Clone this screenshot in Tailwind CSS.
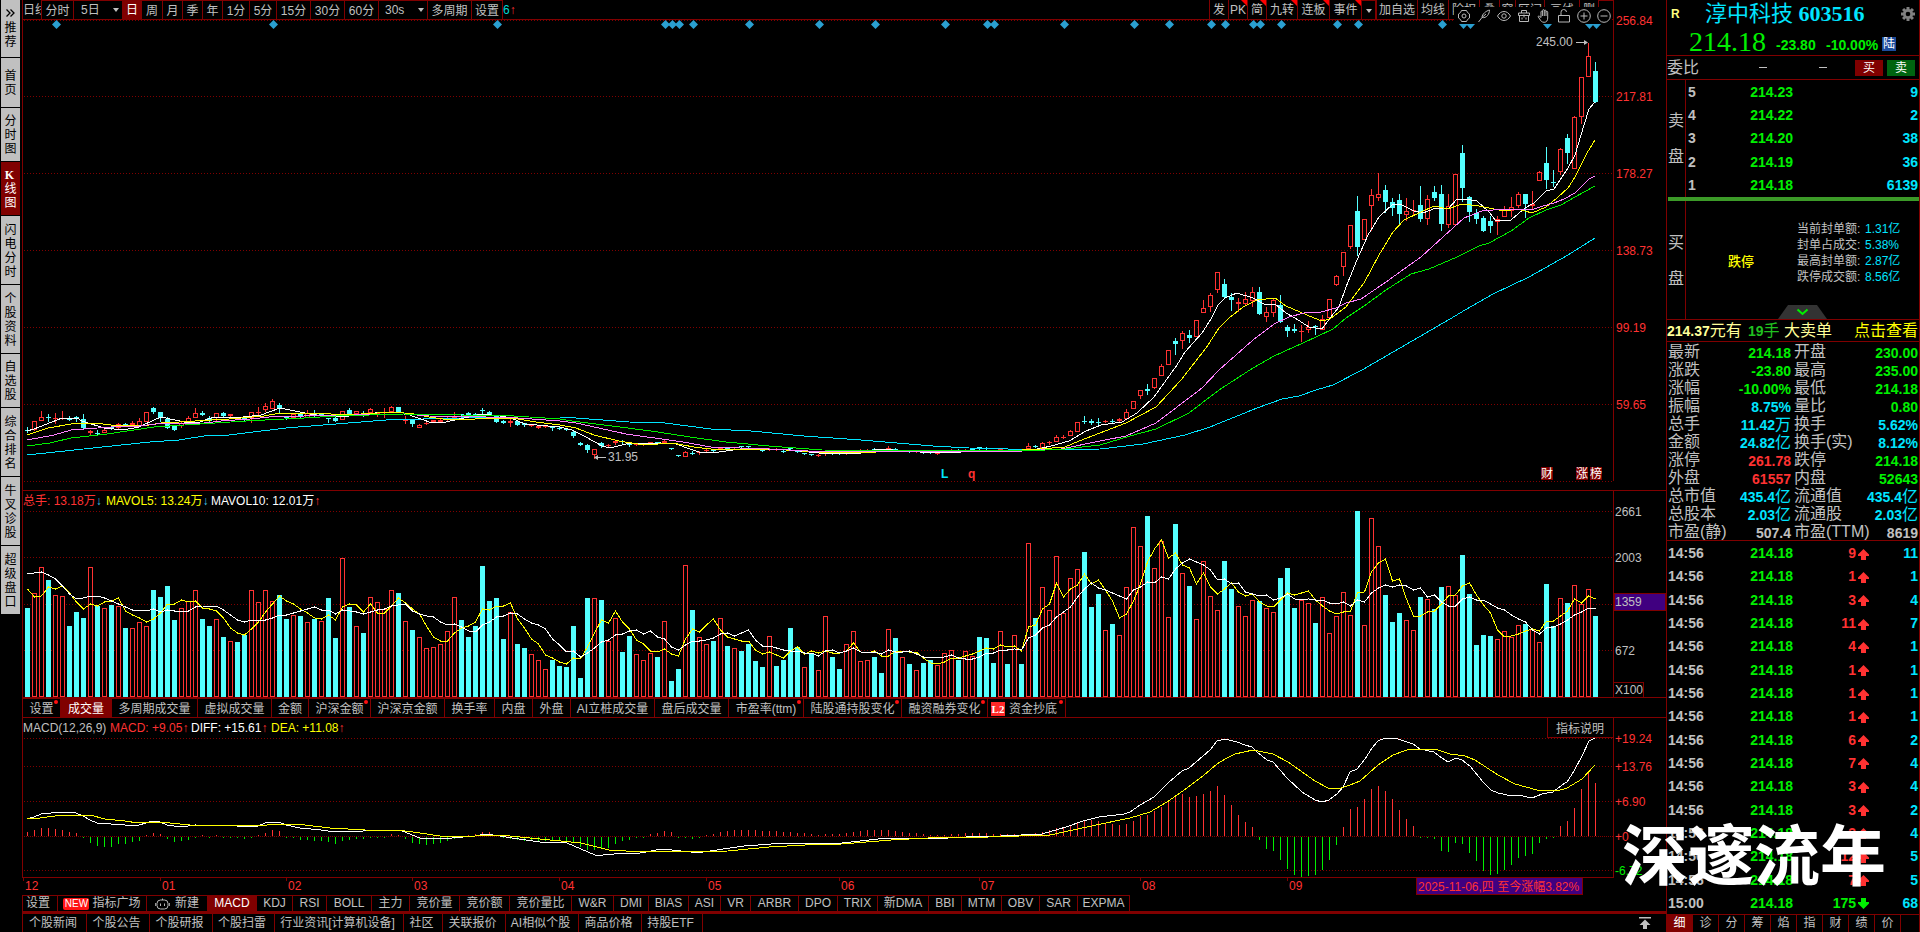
<!DOCTYPE html>
<html lang="zh-CN">
<head>
<meta charset="utf-8">
<title>淳中科技 603516</title>
<script src="https://cdn.jsdelivr.net/npm/@tailwindcss/browser@4"></script>
</head>
<body class="bg-black text-[#c0c0c0] text-xs font-['Liberation_Sans','Noto_Sans_CJK_SC',sans-serif]">
<div class="relative flex min-h-screen w-full overflow-hidden bg-black">

  <nav class="flex w-[22px] shrink-0 flex-col gap-px pl-px pr-[2px] text-black *:flex *:w-[19px] *:flex-col *:items-center *:justify-center *:bg-[#c0c0c0] *:pt-px *:leading-[14px]" aria-label="功能导航">
    <button class="h-[57px]"><svg class="mb-1 h-2 w-[9px]" viewBox="0 0 9 8" fill="none" stroke="#000" stroke-width="1.3"><path d="M.5 .5 4 4 .5 7.500M4.500 .5 8 4 4.500 7.500"/></svg><span class="w-3 break-all">推荐</span></button>
    <button class="h-[49px]"><span class="w-3 break-all">首页</span></button>
    <button class="h-[53px]"><span class="w-3 break-all">分时图</span></button>
    <button class="h-[53px] bg-[#800000]! text-white"><b class="-ml-[2px] font-['Liberation_Serif',serif]">K</b><span class="w-3 break-all">线图</span></button>
    <button class="h-[68px]"><span class="w-3 break-all">闪电分时</span></button>
    <button class="h-[68px]"><span class="w-3 break-all">个股资料</span></button>
    <button class="h-[53px]"><span class="w-3 break-all">自选股</span></button>
    <button class="h-[68px]"><span class="w-3 break-all">综合排名</span></button>
    <button class="h-[68px]"><span class="w-3 break-all">牛叉诊股</span></button>
    <button class="h-[68px]"><span class="w-3 break-all">超级盘口</span></button>
  </nav>

  <main class="flex min-w-0 flex-1 flex-col">
    <div class="relative flex h-5 justify-between">
      <div class="flex h-5 whitespace-nowrap border-b border-[#800000] *:h-[19px] *:border-[#800000] *:pt-px">
        <button class="w-[19px] overflow-hidden border-l text-left">日线</button>
        <button class="w-8 border-l border-t">分时</button>
        <label class="relative w-[49px] border-l border-t"><select aria-label="多日分时" class="h-[17px] w-full appearance-none bg-black pl-[7px] leading-[17px]"><option>5日</option></select><i class="pointer-events-none absolute right-[3px] top-[7px] border-x-[3px] border-t-4 border-x-transparent border-t-[#c0c0c0]"></i></label>
        <button class="w-5 bg-[#800000] text-white">日</button>
        <button class="w-5 border-t">周</button>
        <button class="w-5 border-l border-t">月</button>
        <button class="w-5 border-l border-t">季</button>
        <button class="w-5 border-l border-t">年</button>
        <button class="w-[27px] border-l border-t">1分</button>
        <button class="w-[27px] border-l border-t">5分</button>
        <button class="w-[34px] border-l border-t">15分</button>
        <button class="w-[34px] border-l border-t">30分</button>
        <button class="w-[34px] border-l border-t">60分</button>
        <label class="relative w-[49px] border-l border-t"><select aria-label="秒周期" class="h-[17px] w-full appearance-none bg-black pl-[6px] leading-[17px]"><option>30s</option></select><i class="pointer-events-none absolute right-[3px] top-[7px] border-x-[3px] border-t-4 border-x-transparent border-t-[#c0c0c0]"></i></label>
        <button class="w-11 border-l border-t">多周期</button>
        <button class="w-8 border-x border-t">设置</button>
        <span class="leading-[19px] text-[#00d8d8]">6<b class="text-[#ff3232]">↑</b></span>
      </div>
      <div class="flex-1 border-b border-[#800000]"></div>
      <div class="mr-[52px] flex h-5 whitespace-nowrap border-b border-r border-[#800000] *:h-[19px] *:shrink-0 *:border-l *:border-[#800000] *:pt-px">
        <button class="w-[19px]">发</button>
        <button class="relative w-[19px]">PK<i class="absolute right-0 top-0 border-l-[6px] border-t-[6px] border-l-transparent border-t-[#f00]"></i></button>
        <button class="relative w-[19px]">简<i class="absolute right-0 top-0 border-l-[6px] border-t-[6px] border-l-transparent border-t-[#f00]"></i></button>
        <button class="relative w-[31px]">九转<i class="absolute right-0 top-0 border-l-[6px] border-t-[6px] border-l-transparent border-t-[#f00]"></i></button>
        <button class="relative w-8">连板<i class="absolute right-0 top-0 border-l-[6px] border-t-[6px] border-l-transparent border-t-[#f00]"></i></button>
        <button class="relative w-8">事件<i class="absolute right-0 top-0 border-l-[6px] border-t-[6px] border-l-transparent border-t-[#f00]"></i></button>
        <button class="flex w-[15px] items-center justify-center border-t border-r" aria-label="更多事件"><i class="border-x-[3px] border-t-4 border-x-transparent border-t-[#c0c0c0]"></i></button>
        <button class="w-[41px]">加自选</button>
        <button class="w-[31px]">均线</button>
        <button class="w-[31px]">除权</button>
        <button class="w-5">叠</button>
        <button class="w-4">窗</button>
        <button class="w-[29px]">区间</button>
        <button class="w-[35px]">画线</button>
        <button class="w-[19px]">删</button>
        <button class="w-[15px] border-t" aria-label="展开"></button>
      </div>
      <div class="absolute right-[54px] top-[7px] flex h-[17px] w-[158px] items-center bg-black text-[#b8b8b8] *:flex *:w-5 *:shrink-0 *:justify-center [&_svg]:h-[14px] [&_svg]:w-[14px] [&_svg]:fill-none [&_svg]:stroke-current">
        <button aria-label="设置"><svg viewBox="0 0 14 14"><path d="M4.500 1.500h5l1 2 2 1.500v4l-2 1.500-1 2h-5l-1-2-2-1.500V5l2-1.500z"/><circle cx="7" cy="7" r="2"/></svg></button>
        <button aria-label="画笔"><svg viewBox="0 0 14 14"><path d="M1.500 13 5 8.500M5 8.500C5 5 9 2 12.500 1c0 4-3 8.500-7.500 7.500zm0 0L9 5" /></svg></button>
        <button aria-label="显示"><svg viewBox="0 0 14 14"><path d="M.5 7C2.500 3.800 4.500 2.500 7 2.500S11.500 3.800 13.500 7C11.500 10.200 9.500 11.500 7 11.500S2.500 10.200.5 7z"/><circle cx="7" cy="7" r="2.200"/></svg></button>
        <button aria-label="工具箱"><svg viewBox="0 0 14 14"><path d="M1.500 4h11v2.500h-11zM2.500 6.500V12.500h9V6.500M4.500 4V1.500h5V4M5 8.500v2M9 8.500v2M7 5.500v3"/></svg></button>
        <button aria-label="拖动"><svg viewBox="0 0 14 14"><path d="M4 8.500V3a.8.8 0 0 1 1.600 0V1.500a.8.8 0 0 1 1.700 0V2a.8.8 0 0 1 1.700 0v1.200a.8.8 0 0 1 1.700 0V9c0 2.500-1.200 4.300-3.500 4.300-2.500 0-3.500-1.500-4.500-3.300L1 7.500c.8-.8 1.800-.2 3 1zM5.600 3v4M7.300 2v5M9 3v4"/></svg></button>
        <button aria-label="锁定"><svg viewBox="0 0 14 14"><path d="M1.500 6.500h11v6.500h-11zM4 6.500V3.500a2.700 2.700 0 0 1 5.500-.5"/></svg></button>
        <button aria-label="放大"><svg viewBox="0 0 14 14"><circle cx="7" cy="7" r="6.300"/><path d="M3.500 7h7M7 3.500v7"/></svg></button>
        <button aria-label="缩小"><svg viewBox="0 0 14 14"><circle cx="7" cy="7" r="6.300"/><path d="M3.500 7h7"/></svg></button>
      </div>
    </div>

    <svg id="price" class="block h-[471px] w-full overflow-visible" viewBox="22 20 1644 471" preserveAspectRatio="none" role="img" aria-label="日K线图"></svg>
    <svg id="volume" class="block h-[207px] w-full" viewBox="22 491 1644 207" preserveAspectRatio="none" role="img" aria-label="成交量"></svg>

    <div class="flex h-5 whitespace-nowrap border-b border-l border-[#800000] *:relative *:h-[19px] *:shrink-0 *:border-r *:border-t *:border-[#800000] *:pt-px [&_i]:absolute [&_i]:right-[2px] [&_i]:top-[1px] [&_i]:h-[4px] [&_i]:w-[4px] [&_i]:rounded-full [&_i]:bg-[#ff1010]">
      <button class="w-[38px]">设置<i></i></button>
      <button class="w-[51px] bg-[#800000] text-white">成交量</button>
      <button class="w-[86px]">多周期成交量</button>
      <button class="w-[74px]">虚拟成交量</button>
      <button class="w-[37px]">金额</button>
      <button class="w-[62px]">沪深金额<i></i></button>
      <button class="w-[74px]">沪深京金额</button>
      <button class="w-[50px]">换手率</button>
      <button class="w-[38px]">内盘</button>
      <button class="w-[38px]">外盘</button>
      <button class="w-[84px]">AI立桩成交量</button>
      <button class="w-[74px]">盘后成交量</button>
      <button class="w-[75px]">市盈率(ttm)<i></i></button>
      <button class="w-[98px]">陆股通持股变化<i></i></button>
      <button class="w-[86px]">融资融券变化<i></i></button>
      <button class="flex w-[78px] items-center gap-1 pl-[3px]"><b class="h-[14px] w-[14px] bg-[#ff2828] font-['Liberation_Serif',serif] text-[11px] leading-[14px] text-white">L2</b>资金抄底<i></i></button>
    </div>

    <svg id="macd" class="block h-[177px] w-full" viewBox="22 718 1644 177" preserveAspectRatio="none" role="img" aria-label="MACD"></svg>

    <div class="flex h-[19px] whitespace-nowrap border-b-[3px] border-l border-[#800000] *:h-4 *:shrink-0 *:border-r *:border-t *:border-[#800000] *:leading-[15px]">
      <button class="w-[35px] pr-1">设置</button>
      <button class="flex w-[89px] items-center justify-center gap-[3px]"><b class="h-3 w-[26px] rounded-[2px] bg-[#ff1414] text-[10px] font-normal leading-3 text-white">NEW</b>指标广场</button>
      <button class="flex w-[61px] items-center justify-center gap-[5px]"><svg class="h-3 w-[15px]" viewBox="0 0 15 12" fill="none" stroke="#b8b8b8"><rect x="2" y="2" width="11" height="9" rx="3.500"/><path d="M7.500 2V.5M.7 5v3M14.300 5v3M5.500 5.500v2.500M9.500 5.500v2.500"/></svg>新建</button>
      <button class="w-[49px] bg-[#800000] text-white">MACD</button>
      <button class="w-9">KDJ</button>
      <button class="w-[34px]">RSI</button>
      <button class="w-[45px]">BOLL</button>
      <button class="w-[38px]">主力</button>
      <button class="w-[50px]">竞价量</button>
      <button class="w-[50px]">竞价额</button>
      <button class="w-[62px]">竞价量比</button>
      <button class="w-[42px]">W&amp;R</button>
      <button class="w-[35px]">DMI</button>
      <button class="w-10">BIAS</button>
      <button class="w-8">ASI</button>
      <button class="w-[30px]">VR</button>
      <button class="w-[48px]">ARBR</button>
      <button class="w-[39px]">DPO</button>
      <button class="w-10">TRIX</button>
      <button class="w-[51px]">新DMA</button>
      <button class="w-[33px]">BBI</button>
      <button class="w-10">MTM</button>
      <button class="w-[38px]">OBV</button>
      <button class="w-[38px]">SAR</button>
      <button class="w-[52px]">EXPMA</button>
    </div>
    <div class="flex h-[18px] whitespace-nowrap border-l border-[#800000] *:shrink-0 *:border-[#800000] *:pr-[3px] *:leading-[18px]">
      <a href="#" class="w-16 border-r text-center">个股新闻</a>
      <a href="#" class="w-[63px] border-r text-center">个股公告</a>
      <a href="#" class="w-[63px] border-r text-center">个股研报</a>
      <a href="#" class="w-[62px] border-r text-center">个股扫雷</a>
      <a href="#" class="w-[129px] border-r text-center">行业资讯[计算机设备]</a>
      <a href="#" class="w-[39px] border-r text-center">社区</a>
      <a href="#" class="w-[63px] border-r text-center">关联报价</a>
      <a href="#" class="w-[73px] border-r text-center">AI相似个股</a>
      <a href="#" class="w-[63px] border-r text-center">商品价格</a>
      <a href="#" class="w-[61px] border-r text-center">持股ETF</a>
      <button class="ml-auto mr-3 flex items-center" aria-label="展开资讯"><svg class="h-3 w-3" viewBox="0 0 12 12" fill="#c0c0c0"><path d="M0 0h12v1.500H0zM6 2.500 11.500 8H8v4H4V8H.5z"/></svg></button>
    </div>
  </main>

  <aside class="flex w-[254px] shrink-0 flex-col border-x border-[#800000] text-base">
    <header class="h-[56px] border-b border-[#800000]">
      <div class="flex h-7 items-center pl-1 pr-1">
        <b class="w-[34px] text-xs text-[#ffff80]">R</b>
        <h1 class="whitespace-nowrap font-['Liberation_Serif','Noto_Sans_CJK_SC',serif] text-[22px] leading-7 text-[#00e5ff]">淳中科技 <b>603516</b></h1>
        <button class="ml-auto" aria-label="设置"><svg class="h-[14px] w-[14px]" viewBox="-7 -7 14 14"><g fill="#808080"><path d="M-1.500-7h3v14h-3z"/><path d="M-1.500-7h3v14h-3z" transform="rotate(45)"/><path d="M-1.500-7h3v14h-3z" transform="rotate(90)"/><path d="M-1.500-7h3v14h-3z" transform="rotate(135)"/><circle r="5"/></g><circle r="2.300" fill="#000"/></svg></button>
      </div>
      <div class="flex h-7 items-center whitespace-nowrap pl-[22px] text-[#00f000]">
        <span class="w-[87px] font-['Liberation_Serif',serif] text-[28px] font-medium leading-7">214.18</span>
        <b class="w-[50px] pt-[6px] text-sm">-23.80</b>
        <b class="w-[56px] pt-[6px] text-sm">-10.00%</b>
        <span class="mt-1 h-[14px] w-[14px] bg-[#1c4c9c] text-center text-xs leading-[14px] text-white">陆</span>
      </div>
    </header>
    <div class="flex h-6 items-center border-b border-[#800000]">
      <span class="w-[92px] leading-6">委比</span><span class="h-px w-2 bg-[#c0c0c0]"></span>
      <span class="ml-[52px] h-px w-2 bg-[#c0c0c0]"></span>
      <button class="ml-auto h-4 w-7 bg-[#800000] text-xs leading-4 text-white">买</button>
      <button class="ml-1 mr-1 h-4 w-7 bg-[#006410] text-xs leading-4 text-white">卖</button>
    </div>
    <div class="flex h-[117px]">
      <div class="flex w-[19px] flex-col items-center justify-center gap-3 border-r border-[#800000]"><span>卖</span><span>盘</span></div>
      <table class="flex-1 text-sm font-bold"><tbody id="asks"></tbody></table>
    </div>
    <div class="ml-px h-1 bg-[#3c9a28]"></div>
    <div class="flex h-[119px] border-b border-[#800000]">
      <div class="flex w-[19px] flex-col items-center justify-center gap-3 border-r border-[#800000] pt-[2px]"><span>买</span><span>盘</span></div>
      <div class="relative flex flex-1 items-start justify-between pl-[42px] pr-4 pt-5 text-xs">
        <b class="pt-8 text-[13px] font-medium text-[#ffff00]">跌停</b>
        <dl class="grid w-[106px] grid-cols-[68px_auto] whitespace-nowrap text-xs leading-4 [&_dd]:text-[#00e5ff]">
          <dt>当前封单额:</dt><dd>1.31亿</dd><dt>封单占成交:</dt><dd>5.38%</dd><dt>最高封单额:</dt><dd>2.87亿</dd><dt>跌停成交额:</dt><dd>8.56亿</dd>
        </dl>
        <button class="absolute bottom-0 left-[92px]" aria-label="展开"><svg class="block h-[14px] w-[49px]" viewBox="0 0 49 14"><path d="M0 14 10 0h29l10 14z" fill="#333"/><path d="M19.500 4.500 24.500 9l5-4.500" fill="none" stroke="#00f000" stroke-width="2"/></svg></button>
      </div>
    </div>
    <div class="flex h-[22px] items-center whitespace-nowrap border-b border-[#800000] leading-[22px] text-[#ffff99]">
      <span class="w-[81px]"><b class="text-sm">214.37</b>元有</span>
      <span class="w-[36px] text-[#20c020]"><b class="text-sm">19</b>手</span>
      <span>大卖单</span>
      <a href="#" class="ml-auto mr-px text-[#ffff00]">点击查看</a>
    </div>
    <table class="block h-[199px] border-b border-[#800000] pt-px"><tbody id="quote" class="block"></tbody></table>
    <table class="block h-[373px]"><tbody id="ticks" class="block text-sm font-bold"></tbody></table>
    <div class="flex h-[18px] border-t border-[#800000] text-xs *:w-[26px] *:border-r *:border-[#800000] *:leading-[17px]">
      <button class="bg-[#800000] text-white">细</button><button>诊</button><button>分</button><button>筹</button><button>焰</button><button>指</button><button>财</button><button>绩</button><button>价</button>
    </div>
  </aside>

  <div class="pointer-events-none absolute right-[34px] top-[824px] whitespace-nowrap text-[66px] font-bold leading-[66px] text-white">深邃流年</div>
</div>

<script>
const X = i => 27.5 + 7 * i;
const RED = '#ff3232', CYAN = '#54ffff', LINE = '#800000', GREY = '#c0c0c0';
const put = (id, s) => document.getElementById(id).innerHTML = s;
const grid = ys => ys.map(y => `<path d="M24 ${y}.5H1613" stroke="${LINE}" stroke-dasharray="1 2"/>`).join('');
const seg = (d, c = LINE, w = 1) => `<path d="${d}" stroke="${c}" stroke-width="${w}" fill="none"/>`;
const text = (x, y, s, c, more = '') => `<text x="${x}" y="${y + 4}" fill="${c}" font-size="12" ${more}>${s}</text>`;
const poly = (pts, c) => `<polyline points="${pts}" fill="none" stroke="${c}" shape-rendering="crispEdges"/>`;
const crisp = s => `<g shape-rendering="crispEdges">${s}</g>`;

/* each candle: colour, high, body top, body bottom, low */
const candles = (
'c427.430.431.432 r421.421.430.431 r411.417.421.421 c414.417.418.421 r413.418.419.423 r411.418.419.419 c416.419.420.420 c416.417.419.421 c414.419.428.428 r430.431.433.435 '+
'c430.433.434.434 r429.430.433.433 c427.427.429.429 r423.424.428.429 c423.424.425.426 r421.423.425.425 r418.421.426.426 r412.412.422.422 c407.408.412.413 c412.412.418.421 '+
'c417.419.428.428 c426.426.430.430 r422.423.426.428 r416.418.423.423 r408.413.418.418 c411.413.415.415 c416.418.421.422 r413.413.418.422 c412.413.416.416 r414.414.416.416 '+
'c417.417.419.419 c416.417.419.420 r412.412.418.423 r407.412.413.414 r403.406.410.412 r399.401.409.409 c403.405.409.412 c417.417.418.419 r414.414.418.418 c413.413.417.417 '+
'r410.413.418.418 c410.413.416.416 c413.413.415.415 c418.418.419.422 c417.418.421.421 r411.411.420.420 c408.410.414.414 r411.411.414.414 c411.414.415.416 r408.409.413.413 '+
'r412.413.414.416 r408.412.413.417 r406.407.412.412 c407.407.412.412 r416.420.421.423 c420.420.424.426 r424.425.428.428 r421.423.424.424 r420.420.422.422 r419.420.422.422 '+
'r416.418.419.420 r412.417.418.419 c414.414.415.416 c412.413.415.417 c413.414.417.417 c408.410.411.414 c411.412.415.415 c415.416.422.422 c420.421.423.423 r419.421.423.426 '+
'c420.421.425.425 c423.423.425.426 r425.425.426.426 r425.426.428.428 r425.425.427.427 c426.427.428.430 c427.428.429.429 c428.429.430.430 c431.432.436.437 c442.443.445.445 '+
'c444.445.450.452 r449.449.455.459 c442.443.446.447 r444.445.446.447 r440.441.443.444 c440.441.442.443 c442.443.445.446 r443.443.445.445 r443.443.445.445 r442.442.443.444 '+
'c442.442.443.443 r440.441.443.443 c448.448.449.449 c455.455.456.456 r451.452.457.457 c451.453.454.454 r451.452.453.454 r449.450.451.451 c449.450.451.451 r448.448.449.449 '+
'c448.448.449.449 r447.447.448.448 c446.446.447.447 c446.446.447.448 c448.448.449.449 c449.450.451.451 r448.449.450.450 r448.449.450.450 c449.451.452.452 c447.448.449.449 '+
'c451.451.452.452 c453.453.454.454 c454.454.455.455 r454.455.456.456 r450.451.453.455 c453.453.454.454 c453.453.454.454 r452.453.454.454 r450.451.452.452 r449.450.451.451 '+
'r449.450.451.451 c448.449.450.450 c449.450.451.451 r446.448.449.450 c448.449.450.450 r450.450.451.451 c451.451.452.452 r451.451.452.452 c452.452.453.453 c452.452.453.453 '+
'r452.453.454.454 r450.451.452.452 r449.450.451.451 c449.450.451.451 r449.450.451.451 c449.449.450.450 c447.447.448.449 c447.448.449.449 c450.450.451.451 r448.449.450.450 '+
'c450.450.451.451 r449.450.451.451 c450.450.451.451 r443.446.449.449 c445.446.447.447 r442.443.448.448 r441.442.443.444 r435.437.442.442 r435.437.438.438 r430.431.436.436 '+
'r422.422.432.432 c416.421.422.423 c419.421.423.424 c418.422.423.424 r420.421.422.422 c419.421.422.422 r418.419.421.421 r409.412.419.419 r401.401.409.409 r390.390.396.399 '+
'c384.389.391.394 r378.378.388.389 r364.366.376.376 r350.350.365.365 c338.341.344.354 r331.333.341.349 c330.335.338.342 r320.320.337.337 r300.308.313.313 r293.295.307.312 '+
'r272.272.290.293 c279.284.297.298 c293.297.300.310 r298.302.304.311 r292.299.304.306 r287.292.301.307 c287.292.314.314 r307.312.317.322 r299.300.313.317 c295.305.322.322 '+
'c325.327.331.336 c324.329.331.332 r325.331.332.341 r321.327.330.333 c325.326.327.334 r315.319.330.330 r299.299.318.318 r275.276.285.286 r252.252.267.276 r225.225.247.249 '+
'c196.211.247.255 r219.219.240.240 r189.195.206.231 r173.194.198.201 c185.190.202.212 c198.202.208.215 c194.200.214.224 r198.211.215.221 r200.210.211.215 c186.205.219.221 '+
'r195.199.219.225 c186.192.198.200 c185.194.224.230 r194.206.225.228 r174.174.225.225 c145.153.188.201 c196.197.212.221 c209.213.219.223 c216.218.231.231 c216.221.226.232 '+
'r216.219.222.235 r206.209.217.217 r197.207.211.217 r192.194.206.208 c194.194.204.217 r191.204.206.209 r171.172.181.181 c147.163.180.188 c170.182.183.186 r148.149.172.175 '+
'c134.138.153.163 r116.117.169.169 r77.77.117.124 r43.56.77.77 c62.71.102.102').split(' ');
const candle = (s, i) => {
  const [h, t, b, l] = s.slice(1).split('.').map(Number), x = 27 + 7 * i;
  if (s[0] === 'c') return `<path d="M${x} ${h}h1V${l + 1}h-1zM${x - 2} ${t}h5V${b}h-5z" fill="${CYAN}"/>`;
  if (b - t < 3) return `<path d="M${x} ${h}h1V${l + 1}h-1zM${x - 2} ${t}h5V${b}h-5z" fill="${RED}"/>`;
  return `<path d="M${x} ${h}h1V${t}h-1zM${x} ${b}h1V${l}h-1z" fill="${RED}"/><rect x="${x - 1.5}" y="${t + .5}" width="4" height="${b - t - 1}" fill="none" stroke="${RED}"/>`;
};
const ma5 = '27,431 34,429 52,422 62,418 77,418 82,421 104,428 123,430 139,427 154,420 161,417 175,420 189,423 200,422 214,417 243,417 261,415 280,408 300,412 321,416 343,417 361,414 389,412 404,413 418,418 432,423 446,422 464,418 482,414 500,416 511,418 525,424 560,427 572,430 586,437 602,446 610,448 626,444 661,443 676,444 690,449 699,452 719,452 740,449 769,449 790,450 819,453 844,454 861,453 879,449 933,453 961,452 986,450 1033,450 1051,446 1069,441 1086,431 1101,425 1122,422 1137,413 1154,397 1177,365 1185,352 1202,333 1211,319 1218,305 1225,298 1237,293 1253,298 1264,304 1275,304 1286,313 1295,318 1309,327 1322,329 1330,318 1339,307 1346,287 1357,260 1368,235 1379,217 1393,204 1400,204 1414,211 1423,213 1436,208 1448,209 1457,199 1464,199 1477,201 1489,212 1496,221 1511,220 1525,208 1534,203 1546,191 1554,189 1568,168 1575,155 1581,135 1589,109 1595,102';
const ma10 = '27,435 48,428 77,423 95,423 111,425 143,426 161,423 179,422 211,420 229,419 264,416 280,413 323,413 339,415 361,414 393,412 414,414 429,417 443,419 464,420 486,418 518,419 536,422 560,425 576,428 594,435 619,441 644,445 672,443 694,447 719,450 769,449 819,452 876,452 897,451 926,450 951,452 1004,451 1040,449 1065,447 1079,441 1100,433 1126,423 1156,407 1181,380 1206,348 1219,328 1229,318 1243,307 1257,300 1275,298 1286,306 1314,318 1322,321 1330,319 1346,307 1364,283 1379,255 1393,232 1404,220 1421,212 1434,206 1448,209 1462,204 1479,206 1504,211 1518,209 1532,213 1546,207 1557,198 1568,188 1575,177 1587,153 1595,140';
const ma20 = '27,440 54,435 71,430 111,427 139,426 164,423 196,424 221,421 250,419 279,416 304,416 404,414 429,416 486,417 518,418 560,421 576,423 626,434 683,442 711,447 769,449 808,451 1022,451 1061,449 1100,441 1126,436 1156,423 1202,388 1219,370 1253,340 1274,324 1289,317 1304,313 1321,312 1336,308 1346,303 1361,299 1386,282 1404,269 1421,257 1443,237 1464,218 1482,211 1504,209 1534,209 1543,206 1554,203 1564,199 1575,193 1589,179 1595,176';
const ma30 = '27,446 50,443 71,438 107,434 154,427 200,424 246,421 304,418 336,416 404,414 461,415 514,416 560,419 572,421 604,425 651,431 690,437 726,442 769,446 822,450 1026,451 1065,449 1100,445 1130,436 1156,429 1189,413 1219,390 1253,368 1274,356 1303,343 1333,329 1346,318 1364,306 1386,290 1411,274 1429,269 1457,257 1479,246 1489,243 1511,231 1529,218 1546,210 1561,205 1575,197 1595,186';
const ma60 = '27,455 46,453 93,448 150,442 179,440 204,436 229,435 286,428 336,424 386,420 461,418 518,417 560,417 576,418 629,422 665,423 711,429 751,431 804,436 861,440 933,446 969,448 1047,450 1100,449 1143,444 1185,435 1210,427 1257,408 1282,399 1299,396 1316,390 1333,385 1362,370 1450,319 1465,310 1493,294 1529,277 1568,255 1595,238';
const diamonds = [56.5,273.5,497.5,665.5,672.5,679.5,693.5,749.5,819.5,875.5,945.5,987.5,994.5,1064.5,1134.5,1169.5,1211.5,1225.5,1253.5,1260.5,1281.5,1337.5,1358.5,1442.5,1463.5,1470.5,1547.5,1589.5,1596.5];
const badge = (x, s) => `<rect x="${x}" y="467" width="12" height="13" fill="${LINE}"/>` + text(x, 474, s, '#fff');

put('price',
  crisp(grid([20, 96, 173, 250, 327, 404, 481]) + seg('M22.500 20V490M1613.500 20V481M22 490.500H1666')) +
  diamonds.map(x => x > 1450 ? `<path d="M${x - 4.5} 24h9l-4.500 5z" fill="#2a9fd0"/>` : `<path d="M${x} 20l4.500 4.500-4.500 4.500-4.500-4.500z" fill="#2a9fd0"/>`).join('') +
  crisp(candles.map(candle).join('')) +
  poly(ma60, '#00e5ff') + poly(ma5, '#fff') + poly(ma10, '#ffff00') + poly(ma20, '#ff80ff') + poly(ma30, '#00f000') +
  [[20, '256.84'], [96, '217.81'], [173, '178.27'], [250, '138.73'], [327, '99.19'], [404, '59.65']].map(([y, s]) => text(1616, y + 1, s, RED)).join('') +
  text(1536, 42, '245.00', GREY) + seg('M1576 42.500h10', GREY) + `<path d="M1584 40l4 2.500-4 2.500z" fill="${GREY}"/>` +
  text(608, 457, '31.95', GREY) + seg('M597 457.500h9', GREY) + `<path d="M598 455l-4 2.500 4 2.500z" fill="${GREY}"/>` +
  text(941, 474, 'L', '#00e5ff', 'font-weight="bold"') + text(968, 474, 'q', RED, 'font-weight="bold"') +
  badge(1541, '财') + badge(1576, '涨') + badge(1590, '榜'));

/* each volume bar: colour and top edge; the base is y = 697 */
const vols = (
'c608 r593 r567 c580 r595 r596 c626 c612 c618 r567 c606 r608 c605 r606 c628 r628 r622 r626 c590 c597 c586 c620 r608 r601 r590 c619 c626 r619 c637 r641 '+
'c642 c635 r590 r602 r590 r601 c595 c619 r615 c616 r622 c619 r621 c598 c638 r558 c607 r626 c633 r597 r602 r609 r590 c593 r621 c630 r637 r648 r647 r644 '+
'r631 r597 c620 c637 c626 c566 c601 c598 c639 r612 c644 c648 r654 r660 r669 c660 c666 c667 c626 c678 c598 r598 c600 r641 r618 c652 c636 r654 r660 r653 '+
'c657 r621 c681 c669 r565 c610 r637 r644 c641 r618 c646 r648 c651 c644 c661 c667 r636 c666 c660 c628 c647 r667 c653 r670 r616 c657 c669 r644 r631 r661 '+
'r660 c657 c673 r629 c638 r657 c664 r670 c663 c660 r665 r653 r650 c660 r651 r656 c637 c638 c663 r631 c664 r635 c664 r543 c618 r587 r610 r556 r613 r578 '+
'r569 c552 c607 c594 r630 c624 r635 r587 r527 r546 c516 r568 r541 r617 c524 r573 c586 r619 r561 r596 r610 c561 c589 r606 r616 r600 c601 r608 r612 c578 '+
'c568 c608 r600 r603 c623 r597 r633 r616 r592 r615 c511 r625 r518 r546 c595 c622 c613 r620 r630 c597 r599 c609 c587 r586 r595 c555 c594 c645 c635 c636 '+
'r639 r631 r637 r625 c624 r629 r642 c584 c626 r598 c603 r585 r604 r589 c616').split(' ');
const tops = vols.map(v => +v.slice(1));
const mavol = (n, head) => head.concat(tops.slice(head.length).map((_, k) => {
  const i = k + head.length;
  return Math.round(tops.slice(i - n + 1, i + 1).reduce((a, b) => a + b) / n);
})).map((y, i) => `${X(i)},${y}`).join(' ');
const arrow = (s, c) => `<tspan fill="${c}" font-weight="bold">${s}</tspan>`;
put('volume',
  crisp(grid([511, 557, 604, 650]) + seg('M22.500 491V697M1613.500 491V697M22 697.500H1666') +
    vols.map((v, i) => {
      const x = 25 + 7 * i, y = tops[i];
      return v[0] === 'c' ? `<rect x="${x}" y="${y}" width="5" height="${697 - y}" fill="${CYAN}"/>`
        : `<rect x="${x + .5}" y="${y + .5}" width="4" height="${696 - y}" fill="#000" stroke="${RED}"/>`;
    }).join('')) +
  poly(mavol(5, [589, 597, 596, 587]), '#ffff00') + poly(mavol(10, [574, 573, 572, 575, 579, 586, 594, 599, 598]), '#fff') +
  text(23, 501, '总手: 13.18万' + arrow('↓', '#40c8e8'), RED) +
  text(106, 501, 'MAVOL5: 13.24万' + arrow('↓', '#40c8e8'), '#ffff00') +
  text(211, 501, 'MAVOL10: 12.01万' + arrow('↑', RED), '#fff') +
  `<rect x="1614.500" y="593.500" width="51" height="17" fill="#400080" stroke="${LINE}"/>` +
  `<rect x="1613.500" y="682.500" width="30" height="15" fill="none" stroke="${LINE}"/>` +
  [[511, '2661'], [557, '2003'], [601, '1359'], [650, '672'], [689, 'X100']].map(([y, s]) => text(1615, y + 1, s, GREY)).join(''));

const hist = [4,6,8,8,7,6,4,3,-1,-6,-9,-10,-10,-7,-7,-5,-4,1,3,2,-2,-5,-4,-3,-1,1,-1,1,-1,-1,-1,-2,-1,1,3,6,5,-1,-1,-3,-3,-4,-4,-5,-7,-4,-3,-2,-2,-1,-1,-1,2,1,-2,-6,-7,-8,-7,-6,-4,-2,-1,1,2,4,4,1,-1,-2,-3,-4,-4,-4,-4,-4,-4,-5,-6,-10,-13,-13,-12,-11,-7,-4,-3,-1,-1,2,3,5,4,-1,-1,-2,-1,1,2,4,5,6,6,6,6,5,5,5,4,4,3,3,2,1,2,2,2,3,4,5,6,6,6,6,5,4,3,3,2,1,1,1,2,2,3,3,3,3,2,2,2,2,2,2,3,4,6,8,8,11,13,15,16,15,13,12,11,12,15,20,21,25,29,35,39,42,39,40,42,45,50,41,31,21,14,9,-3,-12,-14,-23,-32,-38,-40,-39,-38,-33,-23,-8,9,27,29,37,47,50,45,37,26,17,10,-1,-1,-2,-14,-15,-6,-7,-16,-24,-34,-38,-37,-33,-28,-21,-19,-17,-6,-2,-1,10,15,28,47,63,53];
const diff = '27,819 34,817 41,814 62,812 76,813 83,816 90,820 97,823 111,824 125,825 139,825 146,823 153,821 160,822 167,825 181,827 195,825 237,826 244,827 258,826 265,823 272,822 279,822 286,825 300,828 321,830 335,832 363,831 400,830 405,832 412,835 420,838 440,839 452,838 475,836 485,834 500,836 512,838 540,842 567,843 581,849 595,855 603,855 626,853 640,853 662,849 691,852 703,852 744,846 785,843 842,843 887,838 948,838 985,836 1001,836 1042,834 1066,827 1083,821 1099,817 1124,814 1130,812 1140,805 1154,797 1168,783 1182,771 1189,768 1210,750 1217,741 1225,739 1237,742 1245,745 1252,747 1257,752 1267,760 1273,762 1287,778 1302,792 1315,800 1322,802 1329,800 1337,794 1343,787 1350,772 1357,769 1365,759 1372,748 1378,741 1385,738 1395,738 1407,742 1413,744 1420,749 1434,752 1442,758 1448,762 1456,758 1462,760 1470,766 1483,782 1491,790 1498,793 1512,796 1518,795 1532,798 1542,794 1553,792 1562,785 1567,782 1574,771 1582,756 1589,741 1595,738';
const dea = '27,819 40,818 55,816 70,815 90,815 105,819 125,821 138,823 160,822 190,825 235,825 255,826 279,824 305,825 330,828 365,830 405,831 420,833 440,836 475,836 500,835 540,839 581,843 609,850 642,852 728,851 769,847 805,845 842,844 891,840 928,838 989,837 1050,835 1087,827 1120,820 1130,818 1150,812 1167,802 1180,793 1203,776 1217,764 1225,759 1235,754 1253,750 1273,754 1288,762 1315,781 1328,788 1338,789 1350,785 1360,781 1378,765 1393,755 1407,750 1435,749 1450,754 1465,756 1475,760 1498,775 1515,784 1537,790 1557,791 1567,788 1582,779 1595,765';
const months = [[23, '12'], [160, '01'], [286, '02'], [412, '03'], [559, '04'], [706, '05'], [839, '06'], [979, '07'], [1140, '08'], [1287, '09']];
put('macd',
  crisp(grid([738, 766, 801, 870]) + `<path d="M24 836.500H1613" stroke="${LINE}" stroke-dasharray="1 1"/>` +
    seg('M22.500 718V877M1613.500 718V877M22 877.500H1614M1547.500 718V737.500H1613') +
    hist.map((h, i) => seg(`M${X(i)} ${h > 0 ? 836 : 837}v${-h}`, h > 0 ? RED : '#00f000')).join('') +
    months.map(([x]) => seg(`M${x}.5 878v3`)).join('')) +
  poly(diff, '#fff') + poly(dea, '#ffff00') +
  text(23, 728, 'MACD(12,26,9)', GREY) +
  text(110, 728, 'MACD: +9.05' + arrow('↑', RED), RED) +
  text(191, 728, 'DIFF: +15.61' + arrow('↑', RED), '#fff') +
  text(271, 728, 'DEA: +11.08' + arrow('↑', RED), '#ffff00') +
  text(1556, 729, '指标说明', GREY) +
  [[738, '+19.24'], [766, '+13.76'], [801, '+6.90'], [836, '+0']].map(([y, s]) => text(1615, y + 1, s, RED)).join('') +
  text(1615, 871, '-6.72', '#00f000') +
  months.map(([x, s]) => text(x + 2, 886, s, RED)).join('') +
  `<rect x="1416.500" y="877.500" width="166" height="17" fill="#400080" stroke="${LINE}"/>` +
  text(1418, 887, '2025-11-06,四 至今涨幅3.82%', RED));

put('asks', [[5, '214.23', 9], [4, '214.22', 2], [3, '214.20', 38], [2, '214.19', 36], [1, '214.18', 6139]].map(([n, p, q]) =>
  `<tr><td class="w-7 pl-[2px]">${n}</td><td class="w-20 pr-px text-right text-[#00f000]">${p}</td><td class="pr-px text-right text-[#00e5ff]">${q}</td></tr>`).join(''));

const tone = { g: 'text-[#00f000]', c: 'text-[#00e5ff]', r: 'text-[#ff3232]', w: 'text-[#c0c0c0]' };
const val = ([t, s]) => `<td class="w-[62px] text-right ${tone[t]}"><b class="text-sm">${s.replace(/[万亿]/, '')}</b>${(s.match(/[万亿]/) || [''])[0]}</td>`;
put('quote', [
  ['最新', 'g', '214.18', '开盘', 'g', '230.00'], ['涨跌', 'g', '-23.80', '最高', 'g', '235.00'],
  ['涨幅', 'g', '-10.00%', '最低', 'g', '214.18'], ['振幅', 'c', '8.75%', '量比', 'g', '0.80'],
  ['总手', 'c', '11.42万', '换手', 'c', '5.62%'], ['金额', 'c', '24.82亿', '换手(实)', 'c', '8.12%'],
  ['涨停', 'r', '261.78', '跌停', 'g', '214.18'], ['外盘', 'r', '61557', '内盘', 'g', '52643'],
  ['总市值', 'c', '435.4亿', '流通值', 'c', '435.4亿'], ['总股本', 'c', '2.03亿', '流通股', 'c', '2.03亿'],
  ['市盈(静)', 'w', '507.4', '市盈(TTM)', 'w', '8619']
].map(r => `<tr class="flex h-[18px] whitespace-nowrap pl-px leading-[18px]"><th class="w-[61px] text-left font-normal">${r[0]}</th>${val([r[1], r[2]])}<th class="w-[65px] pl-[3px] text-left font-normal">${r[3]}</th>${val([r[4], r[5]])}</tr>`).join(''));

put('ticks', [[9, 11], [1, 1], [3, 4], [11, 7], [4, 1], [1, 1], [1, 1], [1, 1], [6, 2], [7, 4], [3, 4], [3, 2], [3, 4], [12, 5], [7, 5], [175, 68]].map(([q, n], i) => {
  const last = i === 15;
  return `<tr class="flex h-[calc(373px/16)] items-center pl-px pt-px"><td class="w-10">${last ? '15:00' : '14:56'}</td><td class="w-[85px] text-right text-[#00f000]">${'214.18'}</td>` +
    `<td class="w-[63px] text-right ${last ? 'text-[#00f000]' : 'text-[#ff3232]'}">${q}</td><td class="pl-[2px] pt-[2px]"><svg class="block h-[11px] w-[11px]" viewBox="0 0 11 11"><path d="${last ? 'M5.500 11 0 5.500V4h3V0h5v4h3v1.500z' : 'M5.500 0 11 5.500V7H8v4H3V7H0V5.500z'}" fill="${last ? '#00f000' : '#ff3232'}"/></svg></td>` +
    `<td class="flex-1 pr-px text-right text-[#00e5ff]">${n}</td></tr>`;
}).join(''));
</script>
</body>
</html>
